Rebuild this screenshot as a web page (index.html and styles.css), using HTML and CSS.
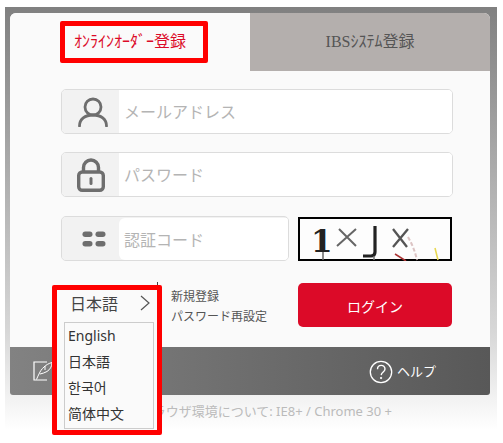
FILE: index.html
```html
<!DOCTYPE html>
<html lang="ja">
<head>
<meta charset="utf-8">
<title>登録</title>
<link rel="stylesheet" href="styles.css">
</head>
<body>
<div class="frame">
  <div class="card">
    <div class="tabs">
      <div class="tab tab-active"><span class="tab-label">ｵﾝﾗｲﾝｵｰﾀﾞｰ登録</span></div>
      <div class="tab tab-other"><span class="tab-label">IBSｼｽﾃﾑ登録</span></div>
    </div>
    <div class="form">
      <div class="field">
        <div class="field-icon">
          <svg class="icon-person" width="30" height="30" viewBox="0 0 30 30" fill="none" stroke="#6e6e6e" stroke-width="2.800" stroke-linecap="round"><circle cx="15" cy="10" r="8"/><path d="M1.500 29c0-7 5.500-11 13.500-11s13.500 4 13.500 11"/></svg>
        </div>
        <div class="field-text">メールアドレス</div>
      </div>
      <div class="field field-gap">
        <div class="field-icon">
          <svg class="icon-lock" width="28" height="34" viewBox="0 0 28 34" fill="none" stroke="#6e6e6e" stroke-width="3.400"><path d="M6.500 15V9.500a7.500 7.500 0 0 1 15 0V15"/><rect x="1.700" y="14" width="24.600" height="18.300" rx="3.500"/><path d="M14 20.500v5" stroke-width="3" stroke-linecap="round"/></svg>
        </div>
        <div class="field-text">パスワード</div>
      </div>
      <div class="row-captcha">
        <div class="field field-short">
          <div class="field-icon">
            <svg class="icon-dots" width="24" height="16" viewBox="0 0 24 16" fill="#6e6e6e"><rect x="0.500" y="0.500" width="10" height="5.500" rx="2.700"/><rect x="13.500" y="0.500" width="10" height="5.500" rx="2.700"/><rect x="0.500" y="10" width="10" height="5.500" rx="2.700"/><rect x="13.500" y="10" width="10" height="5.500" rx="2.700"/></svg>
          </div>
          <div class="field-text field-text-round">認証コード</div>
        </div>
        <svg class="captcha" width="154" height="44" viewBox="0 0 154 44">
          <rect x="1" y="1" width="152" height="42" fill="#fdfdfd" stroke="#000" stroke-width="2"/>
          <text x="13" y="35" class="captcha-one">1</text>
          <path d="M25 35v8" stroke="#666" stroke-width="1.500" fill="none"/>
          <path d="M39 29l19-17M41 12l17 17" stroke="#666" stroke-width="2" fill="none"/>
          <path d="M77 9v26q0 4-4 4h-8" stroke="#222" stroke-width="3.200" fill="none"/>
          <path d="M76 39v4" stroke="#777" stroke-width="1.500" fill="none"/>
          <path d="M95 12l14 18M110 12L95 30" stroke="#555" stroke-width="2.300" fill="none"/>
          <path d="M97 37l11 7" stroke="#a33" stroke-width="1.500" fill="none"/>
          <path d="M110 20q6 10 9 23" stroke="#dcc4c4" stroke-width="2" stroke-dasharray="4 2" fill="none"/>
          <path d="M137 31l3 12" stroke="#e8d850" stroke-width="1.500" fill="none"/>
        </svg>
      </div>
      <div class="row-actions">
        <div class="links">
          <a class="link">新規登録</a>
          <a class="link">パスワード再設定</a>
        </div>
        <button class="login" type="button">ログイン</button>
      </div>
    </div>
    <div class="bar">
      <svg class="bar-edit" width="20" height="20" viewBox="0 0 20 20" fill="none" stroke="#fff"><path d="M14 1H1v18h13" stroke-width="1.200"/><path d="M19 1.500C13 3 8 8 6 13c-1 2-2 4-2.500 5.500M19 1.500c0 4-2 7-5 9-2 1.300-5 2-7 2.500M12 5v4" stroke-width="1"/></svg>
      <div class="bar-help">
        <svg width="24" height="24" viewBox="0 0 24 24" fill="none" stroke="#fff"><circle cx="12" cy="12" r="10.700" stroke-width="1.300"/><path d="M8.500 9.200c0-5 7.500-5 7.500-.3 0 3-3.500 3-3.800 6.200" stroke-width="1.400"/><circle cx="12.100" cy="18" r=".7" fill="#fff"/></svg>
        <span>ヘルプ</span>
      </div>
    </div>
  </div>
  <div class="note">ブラウザ環境について: IE8+ / Chrome 30 +</div>
</div>
<div class="mark mark-tab"></div>
<div class="lang">
  <div class="lang-current"><span>日本語</span>
    <svg width="10" height="16" viewBox="0 0 10 16" fill="none" stroke="#555" stroke-width="1.200"><path d="M1 1l8 7-8 7"/></svg>
  </div>
  <ul class="lang-list">
    <li>English</li>
    <li>日本語</li>
    <li lang="ko">한국어</li>
    <li lang="zh">简体中文</li>
  </ul>
</div>
</body>
</html>
```
FILE: styles.css
```css
* { box-sizing: border-box; }
html, body { margin: 0; padding: 0; }
body {
  width: 503px;
  height: 443px;
  overflow: hidden;
  position: relative;
  background: #fff;
  font-family: "Noto Sans", "Noto Sans CJK JP", sans-serif;
}
.frame {
  margin: 7px 6px 0 5px;
  height: 436px;
  padding: 6px 7px 0 5px;
  background: linear-gradient(to bottom, #808080 0, #d8d8d8 75%, #fff 97%);
}
.card { width: 480px; }
.tabs {
  display: flex;
  height: 58px;
  background: #fafafa;
  border-radius: 6px 6px 0 0;
  overflow: hidden;
}
.tab {
  width: 240px;
  display: flex;
  align-items: center;
  justify-content: center;
  padding-bottom: 4px;
  font-size: 16px;
  font-family: "Liberation Serif", "Noto Sans CJK JP", serif;
}
.tab-active { color: #dc0a28; background: #fafafa; }
.tab-other { color: #555; background: #b4afad; }
.form {
  background: #fafafa;
  padding: 18px 37px 20px 51px;
  height: 276px;
}
.field {
  display: flex;
  height: 45px;
  border: 1px solid #dcdcdc;
  border-radius: 5px;
  background: #fff;
  overflow: hidden;
  margin-bottom: 18px;
}
.field-gap { margin-bottom: 19px; }
.field-icon {
  width: 57px;
  background: #f2f2f2;
  display: flex;
  align-items: center;
  justify-content: center;
  flex: none;
}
.icon-person { margin-left: 5px; }
.icon-lock { margin-left: 1px; }
.icon-dots { margin-left: 7px; }
.field-text {
  flex: 1;
  padding-left: 5px;
  line-height: 45px;
  font-size: 16px;
  color: #b4b4b4;
  background: #fff;
}
.field-short { background: #f2f2f2; width: 228px; margin-bottom: 0; }
.field-text-round { border-radius: 6px 0 0 6px; margin-top: 1px; }
.row-captcha {
  display: flex;
  justify-content: space-between;
  align-items: flex-start;
  margin-bottom: 22px;
}
.captcha { display: block; margin-top: 1px; margin-right: 1px; }
.captcha-one { font-family: "DejaVu Serif", serif; font-weight: 700; font-size: 31px; fill: #222; }
.row-actions {
  display: flex;
  justify-content: space-between;
  padding-right: 1px;
}
.links {
  display: flex;
  flex-direction: column;
  gap: 4px;
  margin: 6px 0 0 110px;
}
.link { font-size: 12px; line-height: 16px; color: #555; }
.login {
  width: 154px;
  height: 44px;
  border: 0;
  border-radius: 5px;
  padding-top: 2px;
  background: #dc0a28;
  color: #fff;
  font-family: inherit;
  font-size: 14px;
}
.bar {
  display: flex;
  align-items: center;
  justify-content: space-between;
  height: 48px;
  padding: 0 54px 0 23px;
  background: linear-gradient(to right, #828282, #585858);
  border-radius: 0 0 3px 3px;
  color: #fff;
  font-size: 13px;
}
.bar-help { display: flex; align-items: center; gap: 4px; }
.bar-help svg { display: block; margin-top: 2px; }
.bar-help span { margin-top: -2px; }
.note {
  margin-top: 8px;
  padding-right: 98px;
  text-align: right;
  font-size: 13px;
  line-height: 16px;
  color: #bbb;
}
.mark {
  position: absolute;
  border: 5px solid #f00;
  border-radius: 2px;
}
.mark-tab { left: 60px; top: 21px; width: 148px; height: 42px; }
.lang {
  position: absolute;
  left: 52px;
  top: 285px;
  width: 110px;
  height: 150px;
  border: 5px solid #f00;
  border-radius: 2px;
  background: #fafafa;
  padding: 0 7px;
  color: #333;
}
.lang::before {
  content: "";
  position: absolute;
  left: 100px;
  top: -8px;
  width: 1px;
  height: 3px;
  background: #444;
}
.lang-current {
  display: flex;
  align-items: center;
  justify-content: space-between;
  height: 32px;
  padding: 0 5px 0 6px;
  font-size: 16px;
  line-height: 24px;
  color: #444;
}
.lang-current span { margin-top: -4px; }
.lang-current svg { margin-top: -6px; margin-right: -5px; }
.lang-list {
  list-style: none;
  margin: 0;
  padding: 0 0 0 3px;
  width: 90px;
  height: 107px;
  border: 1px solid #ccc;
  background: #fafafa;
}
.lang-list li { height: 26px; line-height: 26px; font-size: 14px; }
```
